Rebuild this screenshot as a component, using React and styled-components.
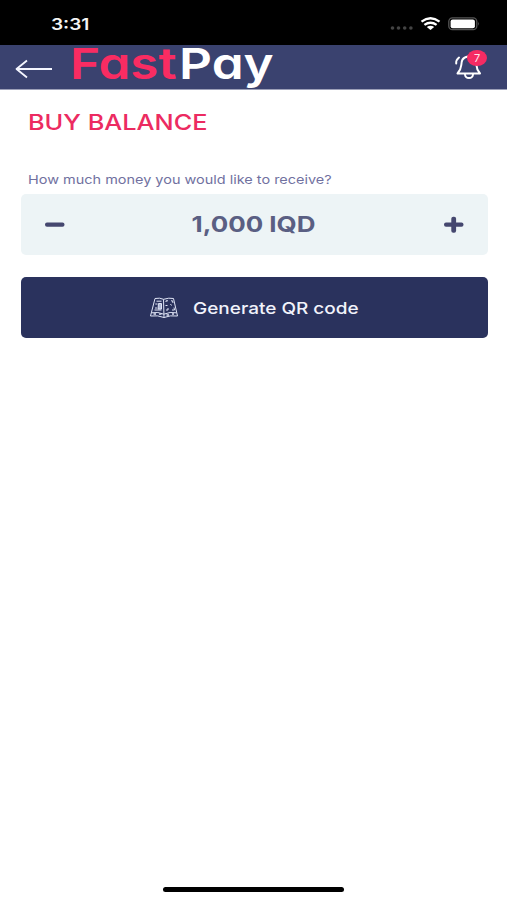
import styled, { createGlobalStyle } from "styled-components";

const GlobalStyle = createGlobalStyle`
  * {
    box-sizing: border-box;
  }
  body {
    margin: 0;
    background: #fff;
    font-family: Inter, "Liberation Sans", sans-serif;
  }
  button {
    border: 0;
    padding: 0;
    background: none;
    font-family: inherit;
    display: flex;
    align-items: center;
  }
`;

const Screen = styled.div`
  height: 900px;
  display: flex;
  flex-direction: column;
  overflow: hidden;
`;

/* extended letter shapes */
const Wide = styled.span`
  display: inline-block;
  white-space: nowrap;
  transform: scaleX(${(p) => p.$stretch || 1.15});
  transform-origin: ${(p) => p.$origin || "left"} center;
`;

const StatusBar = styled.div`
  height: 45px;
  background: #000;
  color: #f4f4f4;
  display: flex;
  align-items: center;
  justify-content: space-between;
  padding: 2px 27px 0 51px;
  font-size: 16px;
  font-weight: 600;
`;
const StatusIcons = styled.div`
  display: flex;
  align-items: center;
`;

const Header = styled.header`
  height: 44px;
  background: #3a426f;
  box-shadow: 0 1px 0 #9ca0b8;
  display: flex;
  align-items: center;
  padding: 0 20px 0 15px;
`;
const BackButton = styled.button`
  width: 55px;
  padding-top: 4px;
`;
const Logo = styled.div`
  display: flex;
  flex: 1;
  height: 44px;
  line-height: 36px;
  font-size: 43px;
  font-weight: 600;
  font-feature-settings: "cv11";
`;
const LogoPart = styled.div`
  width: ${(p) => p.$width}px;
  color: ${(p) => p.$color};
`;
const Bell = styled.button`
  position: relative;
  width: 33px;
  height: 32px;
`;
const Badge = styled.span`
  position: absolute;
  top: -1px;
  right: 0;
  width: 20px;
  height: 16px;
  border-radius: 50%;
  background: #f52b63;
  color: #ffe4ec;
  font-size: 11px;
  line-height: 17px;
  text-align: center;
`;

const Main = styled.main`
  flex: 1;
  padding: 19px 19.5px 0 20.5px;
`;
const Title = styled.h1`
  margin: 0 0 0 7px;
  height: 28px;
  line-height: 28px;
  color: #ec2b61;
  font-size: 22px;
  font-weight: 500;
`;
const Label = styled.div`
  margin: 35px 0 6px 7px;
  height: 17px;
  line-height: 17px;
  color: #71719f;
  font-size: 12px;
`;
const AmountField = styled.div`
  height: 61px;
  border-radius: 5px;
  background: #edf4f6;
  display: flex;
  align-items: center;
  justify-content: space-between;
  padding: 0 24px;
`;
const Amount = styled.div`
  padding-bottom: 1px;
  color: #5a5f83;
  font-size: 22px;
  font-weight: 700;
`;
const GenerateButton = styled.button`
  width: 100%;
  height: 61px;
  margin-top: 22px;
  padding-left: 128px;
  border-radius: 5px;
  background: #2a325d;
  color: #f1f3fb;
  font-size: 16.5px;
  font-weight: 500;
  gap: 14px;
`;
const HomeIndicator = styled.div`
  width: 181px;
  height: 5px;
  margin: 0 auto 8px;
  border-radius: 3px;
  background: #000;
`;

const SignalIcon = () => (
  <svg width="92" height="20" viewBox="0 0 92 20">
    <g fill="#444">
      <circle cx="4.5" cy="14" r="1.800" />
      <circle cx="10.5" cy="14" r="1.800" />
      <circle cx="16.7" cy="14" r="1.800" />
      <circle cx="22.9" cy="14" r="1.800" />
    </g>
    <g fill="none" stroke="#fff" strokeWidth="2.4">
      <path d="M33.500 7.600Q42.500 1 51.500 7.600" />
      <path d="M36.400 10.900Q42.500 6.500 48.600 10.900" />
    </g>
    <path d="M38.800 13Q42.500 10.600 46.200 13L42.500 16Z" fill="#fff" />
    <rect x="60.800" y="3.900" width="28" height="11.800" rx="3.600" fill="#000" stroke="#555" strokeWidth="1.300" />
    <rect x="62.600" y="5.400" width="24.300" height="8.800" rx="2" fill="#fff" />
    <path d="M90.200 7.800Q92 9.700 90.200 11.700Z" fill="#555" />
  </svg>
);

const BackIcon = () => (
  <svg width="38" height="20" viewBox="0 0 38 20" fill="none" stroke="#f4f6ff" strokeWidth="1.800">
    <path d="M1.500 10H37M12 1.500L1.500 10L12 18.500" strokeLinejoin="round" />
  </svg>
);

const BellIcon = () => (
  <svg width="33" height="32" viewBox="0 0 33 32" fill="none" stroke="#fff" strokeWidth="2" strokeLinecap="round" strokeLinejoin="round">
    <path d="M14 5.500C8 6.500 7.500 10 7.300 14C7 18 6 19.500 3.500 22.500H26C23.500 19.500 22.500 18 22.400 14V11" />
    <path d="M11 23.500C11.500 28.300 18.500 28.300 19 23.500" />
    <path d="M2.200 12.500C2 9.800 3 8 5 6.500" />
  </svg>
);

const QrIcon = () => (
  <svg width="30" height="22" viewBox="0 0 30 22" fill="none" stroke="#dfe4f5" strokeWidth="1">
    <path d="M6 1.500Q11 0.500 14.500 2.300Q20 0.500 24.500 1.500L28.500 19Q21 18 15 20.500Q9 18 1.500 19Z" />
    <path d="M14.500 2.300L15 20.500M2.400 15.800Q9 14.500 14.800 17.200Q21 14.500 27.600 15.800" />
    <path d="M7.500 4.200H12.500M6.300 7H8.500M5.500 13H12.500M6 11H8" />
    <path d="M9.500 6.500H12.500V12H9Z" fill="#aeb6d4" />
    <path d="M17 5V3.800H19M22 3.800H23.500L24 6M25 10.500L25.500 13H23M17 13H19V11M16.500 8.500H18.500M21.500 7L22.500 8.500" />
    <path d="M4.500 17H7M10 17.200H12.500M17.500 18H20M23 17H25" strokeWidth="1.300" />
  </svg>
);

const MinusIcon = () => (
  <svg width="20" height="18" viewBox="0 0 20 18">
    <rect x="0" y="6.600" width="19.500" height="4.200" rx="2" fill="#45476f" />
  </svg>
);

const PlusIcon = () => (
  <svg width="20" height="18" viewBox="0 0 20 18" fill="#45476f">
    <rect x="0" y="6.600" width="19.500" height="4.200" rx="2" />
    <rect x="7.300" y="0.700" width="4.800" height="16" rx="2" />
  </svg>
);

const App = () => {
  return (
    <Screen>
      <GlobalStyle />
      <StatusBar>
        <Wide $stretch={1.19}>3:31</Wide>
        <StatusIcons>
          <SignalIcon />
        </StatusIcons>
      </StatusBar>
      <Header>
        <BackButton aria-label="Back">
          <BackIcon />
        </BackButton>
        <Logo>
          <LogoPart $width={109} $color="#f92c62">
            <Wide $stretch={1.19}>Fast</Wide>
          </LogoPart>
          <LogoPart $width={95} $color="#fff">
            <Wide $stretch={1.19}>Pay</Wide>
          </LogoPart>
        </Logo>
        <Bell aria-label="Notifications">
          <BellIcon />
          <Badge>7</Badge>
        </Bell>
      </Header>
      <Main>
        <Title>
          <Wide>BUY BALANCE</Wide>
        </Title>
        <Label>
          <Wide $stretch={1.205}>How much money you would like to receive?</Wide>
        </Label>
        <AmountField>
          <button aria-label="Decrease">
            <MinusIcon />
          </button>
          <Amount>
            <Wide $origin="center" $stretch={1.18}>
              1,000 IQD
            </Wide>
          </Amount>
          <button aria-label="Increase">
            <PlusIcon />
          </button>
        </AmountField>
        <GenerateButton>
          <QrIcon />
          <Wide>Generate QR code</Wide>
        </GenerateButton>
      </Main>
      <HomeIndicator />
    </Screen>
  );
};

export default App;
